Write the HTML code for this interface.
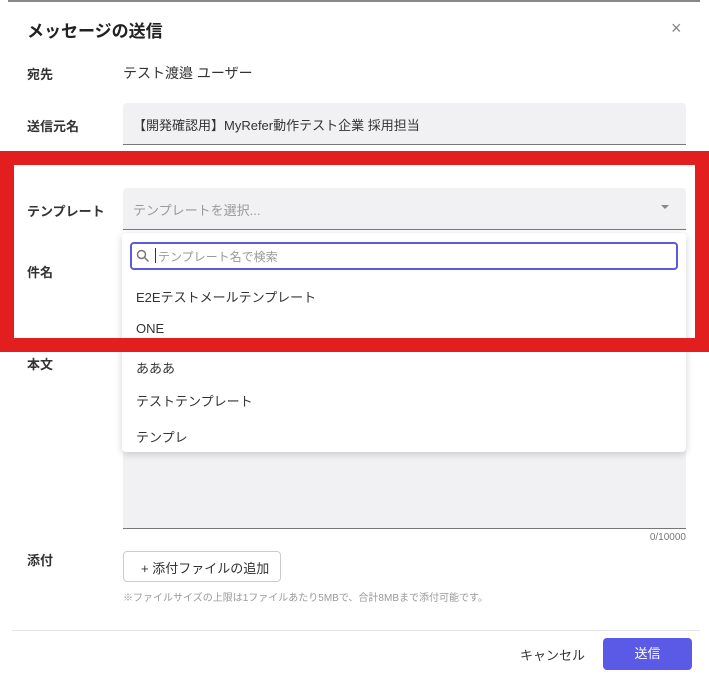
<!DOCTYPE html>
<html><head><meta charset="utf-8"><style>
*{margin:0;padding:0;box-sizing:border-box}
body{width:709px;height:677px;background:#fff;position:relative;overflow:hidden;font-family:"Liberation Sans","Noto Sans CJK JP",sans-serif;color:#222}
.a{position:absolute}
.lbl{position:absolute;left:27px;font-size:13px;font-weight:bold;color:#333}
.inp{position:absolute;left:123px;width:563px;background:#f1f1f3;border-radius:4px 4px 0 0}
.item{position:absolute;left:136px;font-size:13px;color:#333}
</style></head><body>
<div class="a" style="left:8px;top:0;width:692px;height:2px;background:#888"></div>
<div class="a" style="left:27px;top:17px;font-size:17px;font-weight:bold;color:#222">メッセージの送信</div>
<div class="a" style="left:671px;top:18px;font-size:18px;color:#888">×</div>
<div class="lbl" style="top:64px">宛先</div>
<div class="a" style="left:123px;top:63px;font-size:14px;color:#333">テスト渡邉 ユーザー</div>
<div class="lbl" style="top:116px">送信元名</div>
<div class="inp" style="top:103px;height:42px;border-bottom:1px solid #777"></div>
<div class="a" style="left:133px;top:115px;font-size:13px;color:#333">【開発確認用】MyRefer動作テスト企業 採用担当</div>

<div class="lbl" style="top:201px">テンプレート</div>
<div class="inp" style="top:188px;height:42px;border-bottom:1px solid #6a6ae6"></div>
<div class="a" style="left:133px;top:200px;font-size:13px;color:#999">テンプレートを選択...</div>
<div class="a" style="left:661px;top:205px;width:0;height:0;border-left:4px solid transparent;border-right:4px solid transparent;border-top:4px solid #888"></div>
<div class="lbl" style="top:262px">件名</div>
<div class="lbl" style="top:354px">本文</div>
<div class="inp" style="top:440px;height:89px;border-bottom:1px solid #777;border-radius:0"></div>

<div class="a" style="left:122px;top:233px;width:564px;height:219px;background:#fff;border-radius:4px;box-shadow:0 2px 8px rgba(0,0,0,.18)"></div>
<div class="a" style="left:130px;top:242px;width:548px;height:28px;border:2px solid #5a5ae0;border-radius:4px;background:#fff"></div>
<svg class="a" style="left:136px;top:249px" width="14" height="14" viewBox="0 0 14 14"><circle cx="5.5" cy="5.5" r="4" fill="none" stroke="#777" stroke-width="1.5"/><path d="M8.5 8.5L12.5 12.5" stroke="#777" stroke-width="1.5"/></svg>
<div class="a" style="left:155px;top:248px;width:1px;height:15px;background:#333"></div>
<div class="a" style="left:158px;top:248px;font-size:12px;color:#999">テンプレート名で検索</div>
<div class="item" style="top:287px">E2Eテストメールテンプレート</div>
<div class="item" style="top:321px">ONE</div>
<div class="item" style="top:358px">あああ</div>
<div class="item" style="top:391px">テストテンプレート</div>
<div class="item" style="top:427px">テンプレ</div>

<div class="a" style="left:0;top:151px;width:709px;height:201px;border:14px solid #e31e1e;z-index:5"></div>

<div class="a" style="left:600px;top:532px;width:86px;text-align:right;font-size:10px;color:#777">0/10000</div>
<div class="lbl" style="top:550px">添付</div>
<div class="a" style="left:123px;top:551px;width:158px;height:31px;border:1px solid #ccc;border-radius:4px;font-size:13px;color:#333;padding:6px 0 0 17px">+ 添付ファイルの追加</div>
<div class="a" style="left:123px;top:589px;font-size:10px;color:#999">※ファイルサイズの上限は1ファイルあたり5MBで、合計8MBまで添付可能です。</div>
<div class="a" style="left:12px;top:630px;width:688px;height:1px;background:#e5e5e5"></div>
<div class="a" style="left:520px;top:645px;font-size:13px;color:#333">キャンセル</div>
<div class="a" style="left:603px;top:638px;width:89px;height:32px;background:#5a5ae6;border-radius:4px;color:#fff;font-size:13px;text-align:center;line-height:32px">送信</div>
</body></html>
